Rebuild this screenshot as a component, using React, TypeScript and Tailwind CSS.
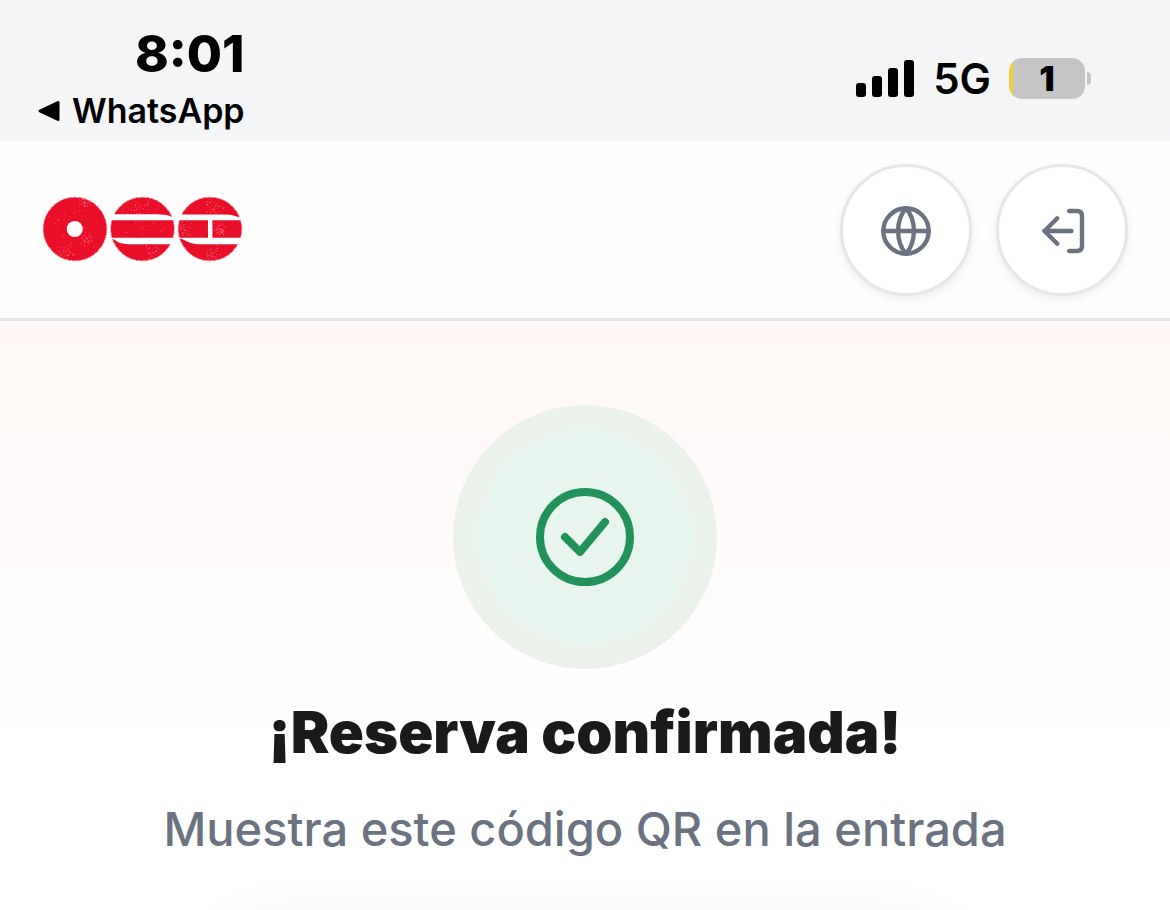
import type { ReactNode } from "react";

const signalBars = ["h-[14px]", "h-[21px]", "h-[29px]", "h-[37px]"];

// Small deterministic generator so the worn ink texture is always the same.
function makeSpecks(count: number) {
  let seed = 7;
  const next = () => {
    seed = (seed * 16807) % 2147483647;
    return seed / 2147483647;
  };
  const clusters = [
    [43, 7, 7],
    [44, 43, 8],
    [24, 56, 10],
    [100, 30, 26],
    [96, 10, 14],
    [112, 56, 12],
    [170, 10, 10],
    [176, 33, 7],
    [170, 56, 9],
    [142, 33, 8],
    [32, 33, 32],
    [168, 33, 32],
  ];
  return Array.from({ length: count }, (_, i) => {
    const [cx, cy, spread] = clusters[i % clusters.length];
    return {
      x: cx + (next() + next() - 1) * spread,
      y: cy + (next() + next() - 1) * spread,
      r: 0.2 + next() * 0.3,
    };
  });
}

const specks = makeSpecks(440);

function Logo() {
  return (
    <svg viewBox="0 1 202 66" className="h-[66px] w-[202px]" role="img" aria-label="Logo">
      <g fill="#e90f29">
        <circle cx="33" cy="33" r="31.6" />
        <circle cx="100.5" cy="33" r="31.6" />
        <circle cx="168" cy="33" r="31.6" />
      </g>
      <g fill="none" stroke="#e90f29" strokeWidth="0.7" strokeDasharray="1 1.4 2 0.8">
        <circle cx="33" cy="33" r="31.8" />
        <circle cx="100.5" cy="33" r="31.8" />
        <circle cx="168" cy="33" r="31.8" />
      </g>
      <g fill="#fffdfd">
        <circle cx="32.7" cy="33" r="8" />
        {/* Upper and lower bands of the second disc */}
        <path d="M67 18.3 H112 Q122 18 127 19.8 Q131 21.6 134 21.8 V24.2 H67 Z" />
        <path d="M67 41.8 H134 V48.2 H86 Q78 48 74 44.8 Q71 42.4 67 42.4 Z" />
        {/* Same bands on the third disc, joined by the upright */}
        <path d="M135 18.6 H179 Q188 18.4 193 20 Q198 21.8 202 22 V24.2 H135 Z" />
        <path d="M135 41.8 H202 V48.2 H157 Q149 48 144 45 Q140 42.6 135 42.6 Z" />
        <rect x="166" y="23" width="4.4" height="20" />
      </g>
      <g fill="#fff" opacity="0.75">
        {specks.map((s, i) => (
          <circle key={i} cx={s.x} cy={s.y} r={s.r} />
        ))}
      </g>
    </svg>
  );
}

function StatusBar() {
  return (
    <div className="flex h-[141px] shrink-0 justify-between bg-[#f4f5f7] pr-[79px] pl-[38px] text-black">
      <div className="flex flex-col items-end pt-6">
        <time className="text-[51px] leading-[60px] font-extrabold">8:01</time>
        <a href="#whatsapp" className="flex items-center gap-3 text-[34px] leading-[54px] font-semibold">
          <svg viewBox="0 0 22 22" className="h-[22px] w-[22px]" aria-hidden="true">
            <path
              d="M20 2.5 V19.5 L2 11 Z"
              fill="currentColor"
              stroke="currentColor"
              strokeWidth="3"
              strokeLinejoin="round"
            />
          </svg>
          WhatsApp
        </a>
      </div>

      <div className="flex items-center self-start pt-[53px]">
        <div className="flex items-end gap-[6px]">
          {signalBars.map((height) => (
            <span key={height} className={`w-[10px] rounded-[3px] bg-black ${height}`} />
          ))}
        </div>
        <span className="ml-[19px] pt-[2px] text-[42px] leading-[48px] font-semibold">5G</span>
        <div className="ml-[18px] flex items-center gap-[2px]">
          <div className="flex h-[41px] w-[76px] items-center justify-center overflow-hidden rounded-[13px] bg-[linear-gradient(90deg,#f2ce3a_4px,#c5c5c7_4px)] text-[34px] leading-[41px] font-black">
            1
          </div>
          <span className="h-[13px] w-[4px] rounded-r-full bg-[#c5c5c7]" />
        </div>
      </div>
    </div>
  );
}

function RoundButton({ label, children }: { label: string; children: ReactNode }) {
  return (
    <button
      type="button"
      aria-label={label}
      className="flex h-[132px] w-[132px] items-center justify-center rounded-full border-[3px] border-[#e5e6ec] bg-white text-[#6b7280] shadow-[0_3px_8px_rgba(0,0,0,0.08)]"
    >
      <svg
        viewBox="0 0 60 60"
        className="h-[60px] w-[60px]"
        fill="none"
        stroke="currentColor"
        strokeWidth="4.4"
        strokeLinecap="round"
        strokeLinejoin="round"
        aria-hidden="true"
      >
        {children}
      </svg>
    </button>
  );
}

function Header() {
  return (
    <header className="flex shrink-0 items-center justify-between border-b-[3px] border-[#e5e6ea] bg-[#fffdfd] px-[42px] pt-[23px] pb-[22px]">
      <Logo />
      <div className="flex gap-6">
        <RoundButton label="Cambiar idioma">
          <circle cx="30" cy="31" r="22.7" />
          <path d="M7.3 31 H52.7" />
          <path d="M30 8.3 C19.5 20 19.5 42 30 53.7" />
          <path d="M30 8.3 C40.5 20 40.5 42 30 53.7" />
        </RoundButton>
        <RoundButton label="Salir">
          <path d="M39.5 31 H12.5" />
          <path d="M25.3 18.3 L12.5 31 L25.3 43.7" />
          <path d="M37.3 11 H45 Q50 11 50 16 V46 Q50 51 45 51 H37.3" />
        </RoundButton>
      </div>
    </header>
  );
}

export default function App() {
  return (
    <div className="flex h-screen flex-col overflow-hidden bg-white font-['Inter',sans-serif]">
      <StatusBar />
      <Header />
      <main className="flex min-h-0 flex-1 flex-col items-center bg-[linear-gradient(180deg,#fff8f6_0px,#fffafa_180px,#ffffff_450px)] pt-[108px] text-center">
        <div className="flex h-[216px] w-[216px] shrink-0 items-center justify-center rounded-full bg-[#e7f5ee] shadow-[0_0_0_24px_#ebf2ec]">
          <svg
            viewBox="0 0 98 98"
            className="h-[98px] w-[98px]"
            fill="none"
            stroke="#22915a"
            strokeWidth="8"
            strokeLinecap="round"
            strokeLinejoin="round"
            aria-hidden="true"
          >
            <circle cx="49" cy="49" r="45" />
            <path d="M29 49 L44 64 L69 34" />
          </svg>
        </div>
        <h1 className="mt-[51px] text-[58px] leading-[72px] font-black text-[#1a1a1a]">
          ¡Reserva confirmada!
        </h1>
        <p className="mt-[25px] text-[47px] leading-[72px] font-medium text-[#6b7280]">
          Muestra este código QR en la entrada
        </p>
        {/* Top edge of the ticket card, just below the fold */}
        <div className="mt-[60px] h-[200px] w-[62%] shrink-0 rounded-[48px] bg-white shadow-[0_12px_72px_rgba(0,0,0,0.08)]" />
      </main>
    </div>
  );
}
